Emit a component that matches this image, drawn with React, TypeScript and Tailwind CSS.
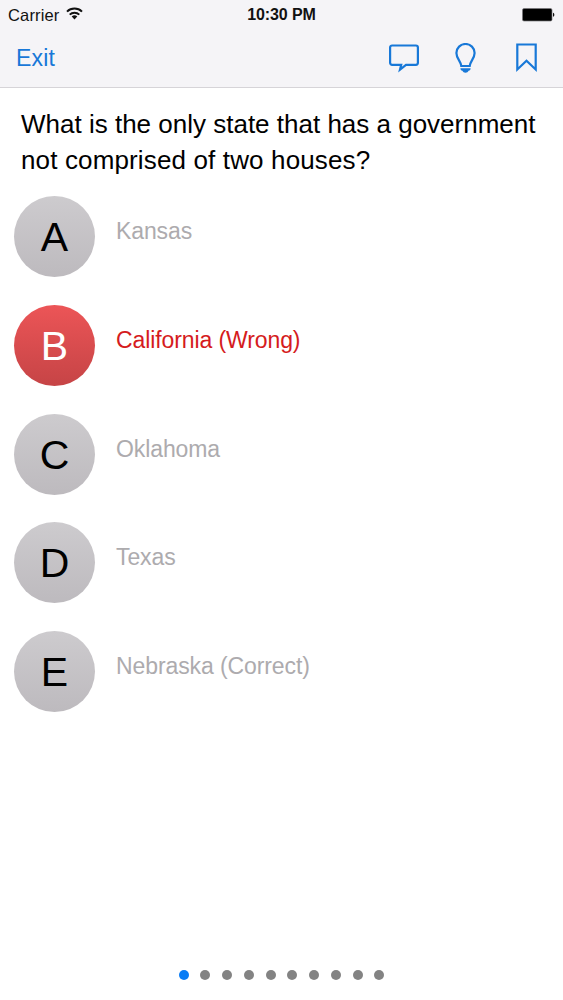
import clsx from 'clsx';

interface Answer {
  letter: string;
  text: string;
  selected?: boolean;
}

const answers: Answer[] = [
  { letter: 'A', text: 'Kansas' },
  { letter: 'B', text: 'California (Wrong)', selected: true },
  { letter: 'C', text: 'Oklahoma' },
  { letter: 'D', text: 'Texas' },
  { letter: 'E', text: 'Nebraska (Correct)' },
];

const PAGE_COUNT = 10;
const currentPage = 0;

function WifiIcon() {
  return (
    <svg className="mb-[3px]" width="17" height="13" viewBox="0 0 17 13" fill="none" stroke="#111" strokeWidth="2">
      <path d="M1 4.6a10.8 10.8 0 0 1 15 0" />
      <path d="M3.7 7.6a6.9 6.9 0 0 1 9.6 0" />
      <path d="M8.5 12.4 5.7 9.6a4 4 0 0 1 5.6 0z" fill="#111" stroke="none" />
    </svg>
  );
}

function BatteryIcon() {
  return (
    <svg width="33" height="14" viewBox="0 0 33 14">
      <rect x="0.5" y="0.5" width="29.5" height="12.5" rx="1.5" fill="#000" stroke="#77757a" strokeWidth="0.7" />
      <path d="M31 4.8c1.8 0.4 1.8 3.6 0 4z" fill="#111" />
    </svg>
  );
}

function CommentIcon() {
  return (
    <svg width="30" height="30" viewBox="0 0 30 30" fill="none" stroke="currentColor" strokeWidth="2.2">
      <path d="M3.100 2.500h23.800a2 2 0 0 1 2 2v15.300a2 2 0 0 1-2 2H17L11 26.600 12.200 21.800H3.100a2 2 0 0 1-2-2V4.500a2 2 0 0 1 2-2z" />
    </svg>
  );
}

function BulbIcon() {
  return (
    <svg width="21" height="30" viewBox="0 0 21 30" fill="none" stroke="currentColor" strokeWidth="2.2">
      <path d="M6.300 23C6 18.500 1.400 15.500 1.400 9.900A9.100 8.900 0 0 1 19.600 9.900C19.600 15.500 15 18.500 14.700 23z" />
      <path d="M5.400 25.200h10.200c0 1.400-.7 2.200-2 2.500-.6 1.300-1.600 2-3.100 2s-2.500-.7-3.100-2c-1.300-.3-2-1.100-2-2.500z" fill="currentColor" stroke="none" />
    </svg>
  );
}

function BookmarkIcon() {
  return (
    <svg width="21" height="30" viewBox="0 0 21 30" fill="none" stroke="currentColor" strokeWidth="2.2">
      <path d="M1.300 1.500h18.400v25L10.500 17.800 1.300 26.500z" />
    </svg>
  );
}

export default function App() {
  return (
    <div className="flex h-[1000px] w-[563px] flex-col overflow-hidden bg-white font-['Liberation_Sans',Arial,sans-serif] text-black">
      <header className="h-[88px] shrink-0 border-b border-[#d6d4d8] bg-[#f5f4f7]">
        {/* Status bar */}
        <div className="grid h-7 grid-cols-3 items-center pl-2 pr-[8px] text-[#111]">
          <div className="flex items-center gap-[7px]">
            <span className="text-[16.5px] leading-7 tracking-[0.15px]">Carrier</span>
            <WifiIcon />
          </div>
          <div className="text-center text-[16px] font-bold leading-[29px] tracking-[-0.1px]">10:30 PM</div>
          <div className="flex justify-end">
            <BatteryIcon />
          </div>
        </div>

        {/* Navigation bar */}
        <nav className="flex h-[59px] items-center justify-between pl-4 pr-[26px] text-[#1878d8]">
          <button className="text-[23px] leading-[58px] tracking-[0.15px]">Exit</button>
          <div className="flex items-center">
            <button aria-label="Comments"><CommentIcon /></button>
            <button aria-label="Hint" className="ml-9"><BulbIcon /></button>
            <button aria-label="Bookmark" className="ml-10"><BookmarkIcon /></button>
          </div>
        </nav>
      </header>

      <main className="flex-1">
        <h1 className="pl-[21px] pt-[18px] text-[26px] leading-[36px]">
          What is the only state that has a government
          <br />
          <span className="tracking-[0.14px]">not comprised of two houses?</span>
        </h1>

        <ul className="mt-[18px] flex flex-col gap-[27.75px] pl-[14px]">
          {answers.map((answer) => (
            <li key={answer.letter} className="flex h-[81px] gap-[21px]">
              <div
                className={clsx(
                  'flex size-[81px] items-center justify-center rounded-full bg-linear-to-b pt-0.5 text-[41px] leading-none',
                  answer.selected
                    ? 'from-[#ec5557] to-[#c64446] text-white'
                    : 'from-[#cdcbce] to-[#bdbabe]'
                )}
              >
                {answer.letter}
              </div>
              <span
                className={clsx(
                  'pt-[20px] text-[23px] leading-[30px] tracking-[-0.1px]',
                  answer.selected ? 'text-[#d51b20]' : 'text-[#adabae]'
                )}
              >
                {answer.text}
              </span>
            </li>
          ))}
        </ul>
      </main>

      {/* Page dots */}
      <div className="flex h-[51px] shrink-0 justify-center gap-[11.75px]">
        {Array.from({ length: PAGE_COUNT }, (_, i) => (
          <span
            key={i}
            className={clsx('mt-[20.500px] size-[10px] rounded-full', i === currentPage ? 'bg-[#087cf5]' : 'bg-[#838383]')}
          />
        ))}
      </div>
    </div>
  );
}
